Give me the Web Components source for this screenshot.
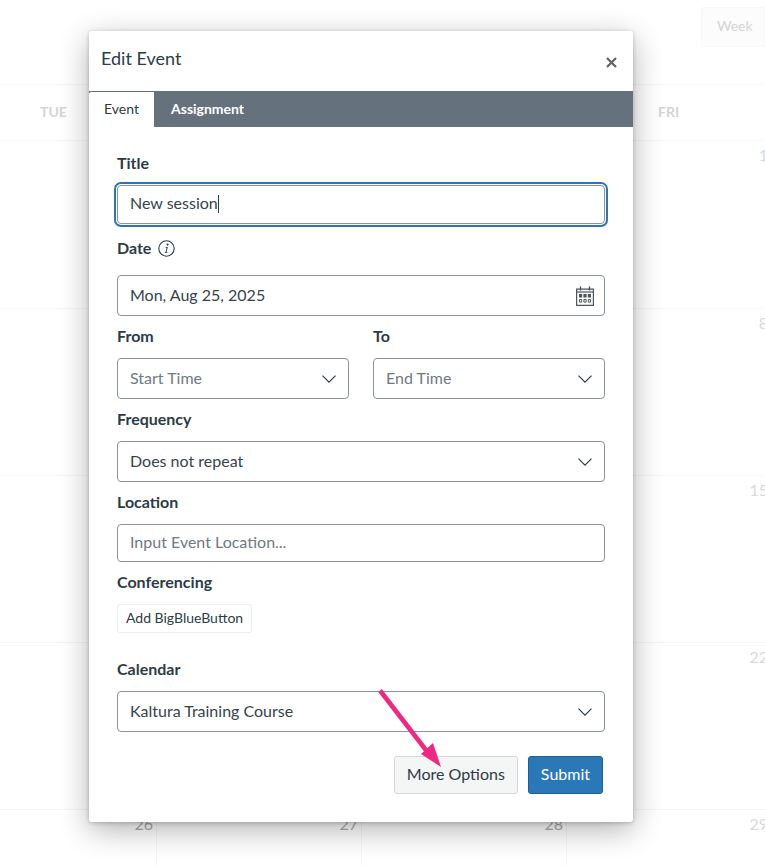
<!DOCTYPE html>
<html lang="en">
<head>
<meta charset="utf-8">
<title>Edit Event</title>
<style>
html, body { margin: 0; height: 865px; overflow: hidden; background: #fff; font-family: Lato, "Open Sans", sans-serif; color: #2d3b45; }
</style>
</head>
<body>
<calendar-backdrop></calendar-backdrop>
<event-dialog heading="Edit Event">
    <event-field label="Title" after="13">
        <event-input focused>New session<span style="display:inline-block;width:1px;height:18px;background:#2d3b45;vertical-align:-4px"></span></event-input>
    </event-field>
    <event-field label="Date" info gap="16" after="9">
        <event-input icon="calendar">Mon, Aug 25, 2025</event-input>
    </event-field>
    <event-row>
        <event-field label="From" after="9"><event-input icon="chevron" placeholder>Start Time</event-input></event-field>
        <event-field label="To" after="9"><event-input icon="chevron" placeholder>End Time</event-input></event-field>
    </event-row>
    <event-field label="Frequency" after="9">
        <event-input icon="chevron">Does not repeat</event-input>
    </event-field>
    <event-field label="Location" after="9">
        <event-input placeholder short>Input Event Location...</event-input>
    </event-field>
    <event-field label="Conferencing" after="25">
        <event-button kind="small">Add BigBlueButton</event-button>
    </event-field>
    <event-field label="Calendar" after="24">
        <event-input icon="chevron">Kaltura Training Course</event-input>
    </event-field>
    <event-footer>
        <event-button>More Options</event-button>
        <event-button kind="primary">Submit</event-button>
    </event-footer>
</event-dialog>
<pointer-arrow></pointer-arrow>

<script>
// faded calendar behind the modal
const backdropTemplate = document.createElement('template');
backdropTemplate.innerHTML = `
<style>
:host{ display: block; height: 865px; overflow: hidden; color: #d3d5d7; }
.top{ display: flex; justify-content: flex-end; height: 85px; box-sizing: border-box; padding-top: 7px; border-bottom: 1px solid #f5f5f5; }
.week{ box-sizing: border-box; width: 64px; height: 40px; padding: 0 0 0 15px; line-height: 36px; font-size: 14px; background: #fcfcfc; border: 1px solid #f8f8f8; border-radius: 3px 0 0 3px; }
.grid{ display: grid; grid-template-columns: repeat(4, 205px); margin-left: -48px; width: 820px; }
.head{ height: 56px; line-height: 53px; padding-right: 2px; box-sizing: border-box; text-align: center; font-size: 14px; font-weight: 700; border-bottom: 1px solid #f5f5f5; }
.day{ box-sizing: border-box; height: 167px; padding: 4px 3px 0 0; text-align: right; font-size: 16px; line-height: 20px; border-right: 1px solid #f5f5f5; border-bottom: 1px solid #f5f5f5; color: #d8d9db; }
.day.first{ height: 168px; }
.day.last{ color: #a9acb0; }
</style>
<div class="top"><div class="week">Week</div></div>
<div class="grid"></div>
`;

class CalendarBackdrop extends HTMLElement {
    constructor(){
        super();
        this._shadowRoot = this.attachShadow({ mode: 'open' });
        this._shadowRoot.appendChild(backdropTemplate.content.cloneNode(true));
        this.$grid = this._shadowRoot.querySelector('.grid');
    }

    connectedCallback() {
        ['TUE', 'WED', 'THU', 'FRI'].forEach((name) => {
            const head = document.createElement('div');
            head.className = 'head';
            head.textContent = name;
            this.$grid.appendChild(head);
        });
        const start = [-2, -1, 0, 1];
        for (let week = 0; week < 5; week++) {
            start.forEach((first) => {
                const day = document.createElement('div');
                const num = first + week * 7;
                day.className = 'day' + (week === 0 ? ' first' : '') + (week === 4 && first < 1 ? ' last' : '');
                day.textContent = num > 0 ? num : '';
                this.$grid.appendChild(day);
            });
        }
    }
}
customElements.define('calendar-backdrop', CalendarBackdrop);

const dialogTemplate = document.createElement('template');
dialogTemplate.innerHTML = `
<style>
:host{ display: block; position: absolute; left: 89px; top: 31px; width: 544px; height: 791px; background: #fff; border-radius: 3px; box-shadow: 0 8px 30px rgba(0,0,0,.3), 0 1px 4px rgba(0,0,0,.22); }
header{ display: flex; align-items: center; justify-content: space-between; height: 59px; padding: 0 16px 0 12px; }
h2{ margin: 0; font-size: 18px; font-weight: 400; position: relative; top: -3px; }
.close{ width: 11px; height: 11px; margin-top: 3px; }
nav{ display: flex; height: 36px; margin-top: 1px; background: #66717e; }
.tab{ font-size: 14px; line-height: 35px; }
.tab.on{ box-sizing: border-box; width: 65px; background: #fff; color: #2d3b45; text-align: center; border-top: 1px solid #66717e; height: 36px; line-height: 33px; border-radius: 3px 0 0 0; }
.tab.off{ color: #fff; font-weight: 700; padding-left: 17px; }
main{ padding: 25px 28px 0; display: flex; flex-direction: column; }
</style>
<header>
    <h2></h2>
    <svg class="close" viewBox="0 0 11 11"><path d="M1 1l9 9M10 1l-9 9" stroke="#5f6368" stroke-width="2.2" fill="none"/></svg>
</header>
<nav><div class="tab on">Event</div><div class="tab off">Assignment</div></nav>
<main><slot></slot></main>
`;

class EventDialog extends HTMLElement {
    constructor(){
        super();
        this._shadowRoot = this.attachShadow({ mode: 'open' });
        this._shadowRoot.appendChild(dialogTemplate.content.cloneNode(true));
    }

    connectedCallback() {
        this._shadowRoot.querySelector('h2').textContent = this.getAttribute('heading');
    }
}
customElements.define('event-dialog', EventDialog);

const fieldTemplate = document.createElement('template');
fieldTemplate.innerHTML = `
<style>
:host{ display: block; }
.label{ display: flex; align-items: center; gap: 7px; height: 22px; font-size: 16px; font-weight: 700; line-height: 22px; }
.label svg{ width: 17px; height: 17px; display: none; }
:host([info]) .label svg{ display: block; }
</style>
<div class="label"><span></span>
    <svg viewBox="0 0 17 17"><circle cx="8.5" cy="8.5" r="7.7" fill="none" stroke="#2d3b45" stroke-width="1.1"/><path d="M9.6 3.4a1 1 0 1 1-.1 0zM7.4 6.9h2.4L8.6 11.9c-.1.5.1.6.8.5l-.1.6H6.6l.1-.6c.7 0 .9-.1 1-.6l.8-3.6c.1-.4-.1-.5-.7-.5z" fill="#2d3b45"/></svg>
</div>
<div class="control"><slot></slot></div>
`;

class EventField extends HTMLElement {
    constructor(){
        super();
        this._shadowRoot = this.attachShadow({ mode: 'open' });
        this._shadowRoot.appendChild(fieldTemplate.content.cloneNode(true));
    }

    connectedCallback() {
        this._shadowRoot.querySelector('span').textContent = this.getAttribute('label');
        this._shadowRoot.querySelector('.control').style.marginTop = (this.getAttribute('gap') || 11) + 'px';
        this.style.marginBottom = (this.getAttribute('after') || 0) + 'px';
    }
}
customElements.define('event-field', EventField);

const rowTemplate = document.createElement('template');
rowTemplate.innerHTML = `
<style>
:host{ display: grid; grid-template-columns: 232px 232px; column-gap: 24px; }
</style>
<slot></slot>
`;

class EventRow extends HTMLElement {
    constructor(){
        super();
        this.attachShadow({ mode: 'open' }).appendChild(rowTemplate.content.cloneNode(true));
    }
}
customElements.define('event-row', EventRow);

const ICONS = {
    chevron: '<svg width="14" height="8" viewBox="0 0 14 8"><path d="M.5.7L7 7.2 13.5.7" fill="none" stroke="#2d3b45" stroke-width="1.15"/></svg>',
    calendar: '<svg width="18" height="20" viewBox="0 0 18 20"><path d="M.6 3.1h16.8v16.3H.6z" fill="#fff" stroke="#4a555e" stroke-width="1.2"/><path d="M1 6h16" stroke="#4a555e" stroke-width="1.2"/><path d="M4.5 .5v4M13.5 .5v4" stroke="#3d4850" stroke-width="1.3"/><path d="M3 8h3.2v3.6H3zM7.4 8h3.2v3.6H7.4zM11.8 8H15v3.6h-3.2z" fill="#4a555e"/><path d="M3.5 13.5h2.2v2.6H3.5zM7.9 13.5h2.2v2.6H7.9zM12.3 13.5h2.2v2.6h-2.2z" fill="#fff" stroke="#4a555e"/></svg>'
};

const inputTemplate = document.createElement('template');
inputTemplate.innerHTML = `
<style>
:host{ display: flex; align-items: center; justify-content: space-between; box-sizing: border-box; height: 41px; padding: 0 12px; background: #fff; border: 1px solid #8b939b; border-radius: 4px; font-size: 16px; color: #36434d; }
:host([placeholder]){ color: #6f7a83; }
:host([short]){ height: 38px; }
:host([focused]){ height: 39px; border-color: #8b939b; box-shadow: 0 0 0 1px #fff, 0 0 0 3px #2b77b5; }
.text{ padding-bottom: 3px; }
:host([focused]) .text, :host([short]) .text{ padding-bottom: 4px; }
.icon{ display: flex; }
:host([icon="calendar"]) .icon{ margin-right: -2px; }
</style>
<div class="text"><slot></slot></div>
<div class="icon"></div>
`;

class EventInput extends HTMLElement {
    constructor(){
        super();
        this._shadowRoot = this.attachShadow({ mode: 'open' });
        this._shadowRoot.appendChild(inputTemplate.content.cloneNode(true));
    }

    connectedCallback() {
        const icon = this.getAttribute('icon');
        if (icon) this._shadowRoot.querySelector('.icon').innerHTML = ICONS[icon];
    }
}
customElements.define('event-input', EventInput);

const buttonTemplate = document.createElement('template');
buttonTemplate.innerHTML = `
<style>
:host{ display: inline-flex; align-items: center; box-sizing: border-box; height: 38px; padding: 0 12px 3px; background: #f4f5f5; border: 1px solid #d4d8db; border-radius: 3px; font-size: 16px; color: #2d3b45; }
:host([kind="primary"]){ background: #2b78b9; border-color: #1f5f96; color: #fff; }
:host([kind="small"]){ height: 29px; padding: 0 8px 3px; background: #fff; border-color: #eceeef; font-size: 14px; }
</style>
<slot></slot>
`;

class EventButton extends HTMLElement {
    constructor(){
        super();
        this.attachShadow({ mode: 'open' }).appendChild(buttonTemplate.content.cloneNode(true));
    }
}
customElements.define('event-button', EventButton);

const footerTemplate = document.createElement('template');
footerTemplate.innerHTML = `
<style>
:host{ display: flex; justify-content: flex-end; gap: 10px; padding-right: 2px; }
</style>
<slot></slot>
`;

class EventFooter extends HTMLElement {
    constructor(){
        super();
        this.attachShadow({ mode: 'open' }).appendChild(footerTemplate.content.cloneNode(true));
    }
}
customElements.define('event-footer', EventFooter);

const arrowTemplate = document.createElement('template');
arrowTemplate.innerHTML = `
<style>
:host{ display: block; position: absolute; left: 370px; top: 680px; width: 80px; height: 95px; }
</style>
<svg width="80" height="95" viewBox="0 0 80 95">
    <path d="M10 10.5L59 74" stroke="#ec2a82" stroke-width="4.6" fill="none"/>
    <path d="M71 87L51 74 63 63z" fill="#ec2a82"/>
</svg>
`;

class PointerArrow extends HTMLElement {
    constructor(){
        super();
        this.attachShadow({ mode: 'open' }).appendChild(arrowTemplate.content.cloneNode(true));
    }
}
customElements.define('pointer-arrow', PointerArrow);
</script>
</body>
</html>
